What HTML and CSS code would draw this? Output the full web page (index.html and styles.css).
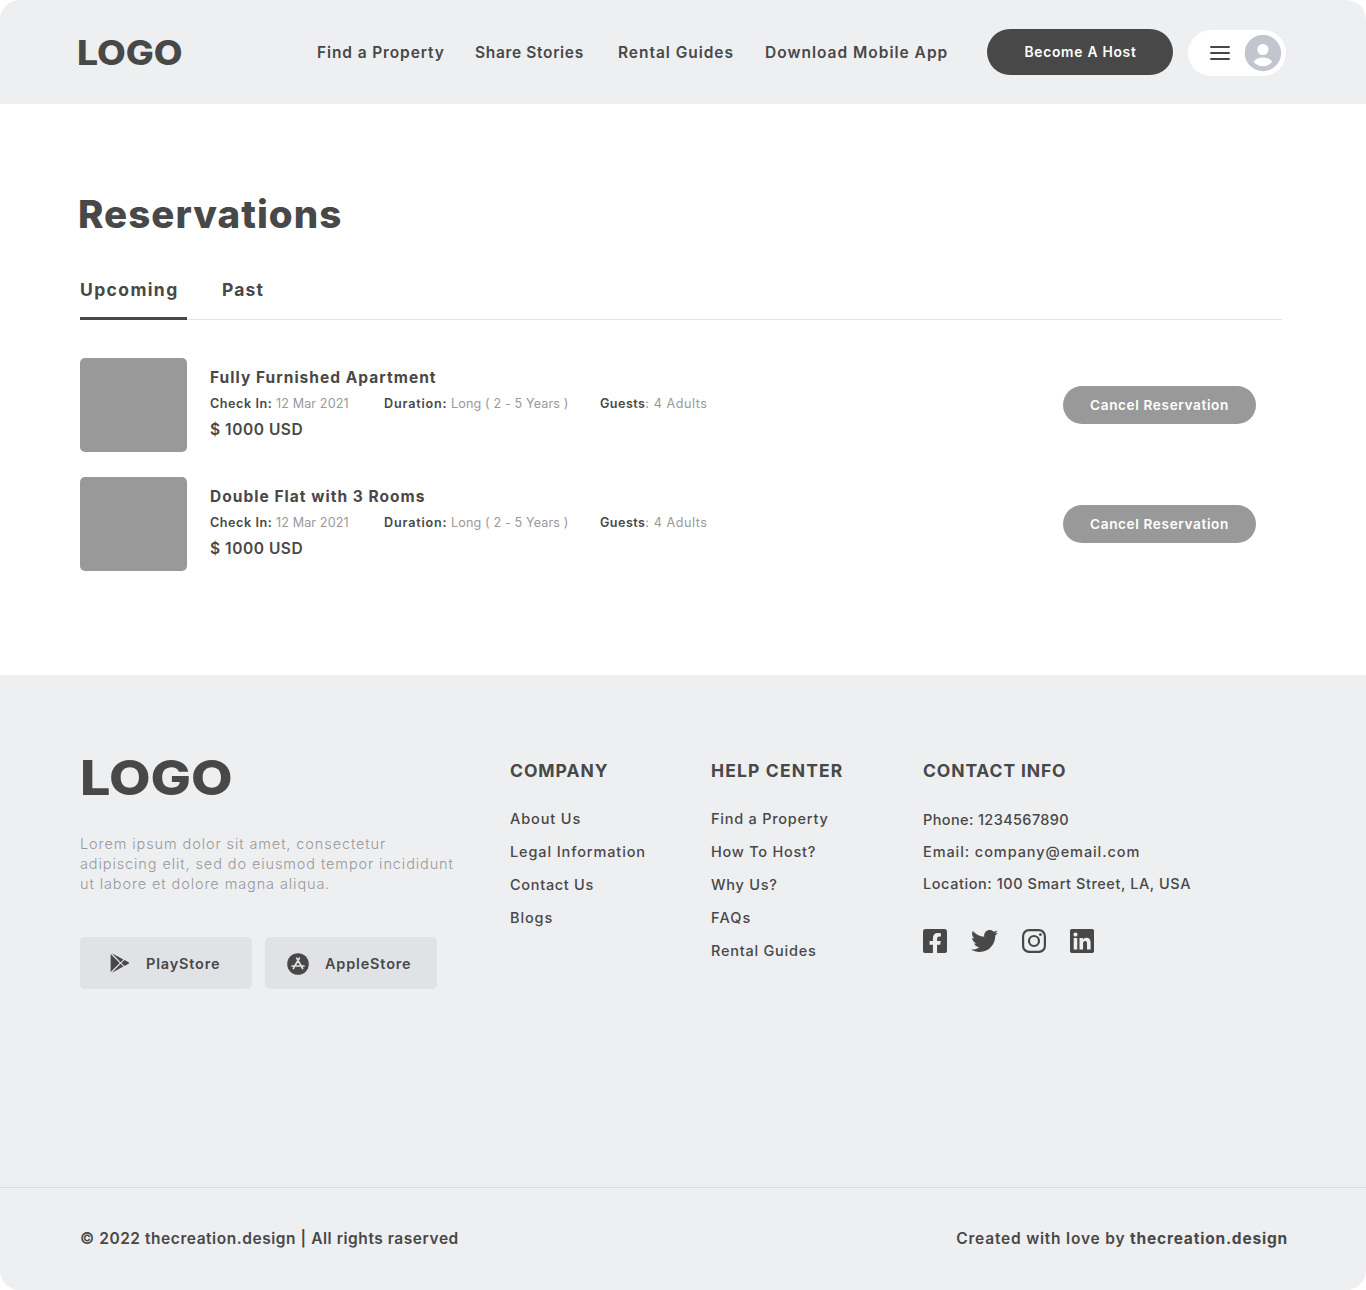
FILE: index.html
```html
<!DOCTYPE html>
<html lang="en">
<head>
<meta charset="utf-8">
<title>Reservations</title>
<link rel="stylesheet" href="styles.css">
</head>
<body>
<div class="page">
  <header class="header">
    <a class="logo">LOGO</a>
    <nav class="nav">
      <a class="nav-find">Find a Property</a>
      <a class="nav-share">Share Stories</a>
      <a class="nav-guides">Rental Guides</a>
      <a class="nav-app">Download Mobile App</a>
    </nav>
    <a class="host-btn">Become A Host</a>
    <div class="account">
      <svg class="menu-icon" width="20" height="16" viewBox="0 0 20 16" stroke="#484848" stroke-width="2" stroke-linecap="round"><path d="M1 2h18M1 8h18M1 14h18"/></svg>
      <svg class="avatar" width="37" height="37" viewBox="0 0 37 37"><circle cx="18.9" cy="18" r="18.2" fill="#c2c5cd"/><circle cx="18.9" cy="14.500" r="5.600" fill="#fff"/><path d="M9.600 26.800c1.700-2.900 5.300-4.400 9.300-4.400s7.600 1.500 9.300 4.400c-2.200 2.900-5.600 4.500-9.300 4.500s-7.100-1.600-9.300-4.500z" fill="#fff"/></svg>
    </div>
  </header>

  <main class="main">
    <h1 class="title">Reservations</h1>
    <div class="tabs">
      <a class="tab tab-active">Upcoming</a>
      <a class="tab tab-past">Past</a>
    </div>
    <section class="list">
      <article class="item">
        <div class="thumb"></div>
        <div class="info">
          <h2 class="name">Fully Furnished Apartment</h2>
          <div class="meta">
            <span class="date"><b class="checkin">Check In:</b> 12 Mar 2021</span>
            <span class="term"><b class="duration">Duration:</b> Long ( 2 - 5 Years )</span>
            <span class="party"><b class="guests">Guests</b>: 4 Adults</span>
          </div>
          <p class="price">$ 1000 USD</p>
        </div>
        <a class="cancel">Cancel Reservation</a>
      </article>
      <article class="item">
        <div class="thumb"></div>
        <div class="info">
          <h2 class="name">Double Flat with 3 Rooms</h2>
          <div class="meta">
            <span class="date"><b class="checkin">Check In:</b> 12 Mar 2021</span>
            <span class="term"><b class="duration">Duration:</b> Long ( 2 - 5 Years )</span>
            <span class="party"><b class="guests">Guests</b>: 4 Adults</span>
          </div>
          <p class="price">$ 1000 USD</p>
        </div>
        <a class="cancel">Cancel Reservation</a>
      </article>
    </section>
  </main>

  <footer class="footer">
    <div class="footer-top">
      <section class="brand">
        <a class="footer-logo">LOGO</a>
        <p class="about">Lorem ipsum dolor sit amet, consectetur<br>adipiscing elit, sed do eiusmod tempor incididunt<br>ut labore et dolore magna aliqua.</p>
        <div class="stores">
          <a class="store store-play">
            <svg width="20" height="20" viewBox="0 0 20 20" fill="#484848"><path d="M.6.9v18.200L9.700 10z"/><path d="M1.900.2l11.500 6.300-2.700 2.700zM1.900 19.800l11.500-6.300-2.700-2.700zM14.400 7l4.200 2.300q.9.700 0 1.400L14.400 13l-3-3z"/></svg>
            <span>PlayStore</span>
          </a>
          <a class="store store-apple">
            <svg width="22" height="22" viewBox="0 0 22 22"><circle cx="11" cy="11" r="10.800" fill="#484848"/><g fill="none" stroke="#e1e2e6" stroke-width="1.700" stroke-linecap="round"><path d="M9.700 5.200l5.900 10.300M12.300 5.200L7.600 13.300M6.900 14.600l-.5.900M5.100 13h7.200M15 13h2"/></g></svg>
            <span>AppleStore</span>
          </a>
        </div>
      </section>
      <section class="column company">
        <h3>COMPANY</h3>
        <a>About Us</a>
        <a>Legal Information</a>
        <a class="snug">Contact Us</a>
        <a>Blogs</a>
      </section>
      <section class="column help">
        <h3>HELP CENTER</h3>
        <a>Find a Property</a>
        <a>How To Host?</a>
        <a>Why Us?</a>
        <a class="faqs">FAQs</a>
        <a>Rental Guides</a>
      </section>
      <section class="column contact">
        <h3>CONTACT INFO</h3>
        <p class="phone">Phone: 1234567890</p>
        <p>Email: company@email.com</p>
        <p class="location">Location: 100 Smart Street, LA, USA</p>
        <div class="social">
          <svg width="24" height="24" viewBox="0 32 448 448" fill="#484848"><path d="M400 32H48A48 48 0 0 0 0 80v352a48 48 0 0 0 48 48h137.250V327.690h-63V256h63v-54.640c0-62.150 37-96.480 93.670-96.480 27.140 0 55.520 4.840 55.520 4.840v61h-31.270c-30.810 0-40.420 19.120-40.420 38.730V256h68.780l-11 71.690h-57.780V480H400a48 48 0 0 0 48-48V80a48 48 0 0 0-48-48z"/></svg>
          <svg width="27" height="24" viewBox="0 32 512 448" fill="#484848"><path d="M459.370 151.716c.325 4.548.325 9.097.325 13.645 0 138.720-105.583 298.558-298.558 298.558-59.452 0-114.680-17.219-161.137-47.106 8.447.974 16.568 1.299 25.340 1.299 49.055 0 94.213-16.568 130.274-44.832-46.132-.975-84.792-31.188-98.112-72.772 6.498.974 12.995 1.624 19.818 1.624 9.421 0 18.843-1.300 27.614-3.573-48.081-9.747-84.143-51.980-84.143-102.985v-1.299c13.969 7.797 30.214 12.670 47.431 13.319-28.264-18.843-46.781-51.005-46.781-87.391 0-19.492 5.197-37.360 14.294-52.954 51.655 63.675 129.300 105.258 216.365 109.807-1.624-7.797-2.599-15.918-2.599-24.040 0-57.828 46.782-104.934 104.934-104.934 30.213 0 57.502 12.670 76.670 33.137 23.715-4.548 46.456-13.320 66.599-25.340-7.798 24.366-24.366 44.833-46.132 57.827 21.117-2.273 41.584-8.122 60.426-16.243-14.292 20.791-32.161 39.308-52.628 54.253z"/></svg>
          <svg width="24" height="24" viewBox="0 0 24 24" fill="none" stroke="#484848" stroke-width="2.200"><rect x="1.100" y="1.100" width="21.800" height="21.800" rx="6"/><circle cx="12" cy="12" r="5"/><circle cx="18.400" cy="5.600" r="1.450" fill="#484848" stroke="none"/></svg>
          <svg width="24" height="24" viewBox="0 32 448 448" fill="#484848"><path d="M416 32H31.900C14.300 32 0 46.500 0 64.300v383.400C0 465.500 14.300 480 31.900 480H416c17.600 0 32-14.500 32-32.300V64.300c0-17.800-14.400-32.300-32-32.300zM135.400 416H69V202.200h66.500V416zm-33.200-243c-21.300 0-38.500-17.300-38.500-38.500S80.900 96 102.200 96c21.200 0 38.500 17.300 38.500 38.500 0 21.300-17.200 38.500-38.500 38.500zm282.100 243h-66.400V312c0-24.800-.5-56.700-34.500-56.700-34.600 0-39.900 27-39.900 54.900V416h-66.400V202.200h63.700v29.200h.9c8.900-16.800 30.600-34.500 62.900-34.500 67.200 0 79.700 44.300 79.700 101.900V416z"/></svg>
        </div>
      </section>
    </div>
    <div class="footer-bottom">
      <p class="copyright">© 2022 thecreation.design | All rights raserved</p>
      <p class="credit">Created with love by <b>thecreation.design</b></p>
    </div>
  </footer>
</div>
</body>
</html>
```
FILE: styles.css
```css
* { box-sizing: border-box; }
body { margin: 0; background: #fff; color: #484848; font-family: Inter, "Open Sans", sans-serif; }
h1, h2, h3, p { margin: 0; }
svg { display: block; flex: none; }
.page { width: 1366px; height: 1290px; display: flex; flex-direction: column; overflow: hidden; border-radius: 20px; background: #fff; white-space: nowrap; }

.header { height: 104px; display: flex; align-items: center; padding-left: 77px; background: #eeeff1; }
.logo { width: 240px; padding-top: 2px; font-size: 34.5px; font-weight: 800; line-height: 42px; transform: scaleX(1.08); transform-origin: left; }
.nav { width: 670px; display: grid; grid-template-columns: 158px 143px 147px 222px; padding-top: 2px; font-size: 15.5px; font-weight: 600; line-height: 24px; }
.nav-find { letter-spacing: .88px; }
.nav-share { letter-spacing: .66px; }
.nav-guides { letter-spacing: .96px; }
.nav-app { letter-spacing: 1px; }
.host-btn { width: 186px; height: 46px; padding-left: 1px; border-radius: 23px; background: #484848; color: #fff; font-size: 13.8px; font-weight: 600; letter-spacing: .75px; line-height: 46px; text-align: center; }
.account { width: 98px; height: 46px; display: flex; align-items: center; gap: 14px; margin: 2px 0 0 15px; padding-left: 22px; border-radius: 23px; background: #fff; }

.main { height: 571px; padding: 85px 84px 0 80px; }
.title { margin-left: -2px; font-size: 38.5px; font-weight: 800; letter-spacing: 1.02px; line-height: 50px; }
.tabs { height: 45px; display: flex; margin-top: 36px; border-bottom: 1px solid #e5e5e5; font-size: 17.5px; font-weight: 700; line-height: 30px; }
.tab { height: 45px; }
.tab-active { width: 107px; border-bottom: 3px solid #484848; letter-spacing: 1.38px; }
.tab-past { margin-left: 35px; letter-spacing: 1.1px; }
.list { display: flex; flex-direction: column; gap: 25px; margin-top: 38px; }
.item { height: 94px; display: flex; align-items: center; padding-right: 26px; }
.thumb { width: 107px; height: 94px; border-radius: 5px; background: #999; }
.info { flex: 1; margin-left: 23px; padding-bottom: 3px; }
.name { font-size: 15.5px; font-weight: 700; letter-spacing: 1.03px; line-height: 26px; }
.meta { display: grid; grid-template-columns: 174px 216px 150px; color: #999; font-size: 12.6px; line-height: 26px; }
.meta b { color: #484848; font-weight: 600; }
.date { letter-spacing: .12px; }
.term { letter-spacing: .12px; }
.party { letter-spacing: .55px; }
.checkin { letter-spacing: .55px; }
.duration { letter-spacing: .82px; }
.guests { letter-spacing: .43px; }
.price { font-size: 15.5px; font-weight: 600; letter-spacing: .54px; line-height: 26px; }
.cancel { width: 193px; height: 38px; border-radius: 19px; background: #999; color: #fff; font-size: 13.6px; font-weight: 600; letter-spacing: .63px; line-height: 38px; text-align: center; }

.footer { height: 615px; background: #eeeff1; }
.footer-top { height: 512px; display: grid; grid-template-columns: 430px 201px 212px 1fr; padding: 77px 80px 0; }
.footer-logo { display: block; width: 170px; font-size: 48.5px; font-weight: 800; line-height: 52px; transform: scaleX(1.11); transform-origin: left; }
.about { margin-top: 30px; color: #999; font-size: 14.5px; font-weight: 300; letter-spacing: .9px; line-height: 20px; }
.stores { display: flex; gap: 13px; margin-top: 43px; }
.store { width: 172px; height: 52px; display: flex; align-items: center; padding-top: 1px; border-radius: 5px; background: #e1e2e6; font-size: 14.5px; font-weight: 600; letter-spacing: .82px; }
.store-play { padding-left: 30px; gap: 16px; }
.store-play svg { margin-top: -1px; }
.store-apple { padding-left: 22px; gap: 16px; }
.column { padding-top: 7px; font-size: 14.5px; font-weight: 500; letter-spacing: .88px; }
.column h3 { margin-bottom: 19px; font-size: 17.5px; font-weight: 700; letter-spacing: .95px; line-height: 24px; }
.column a { display: block; line-height: 33px; }
.column .snug { letter-spacing: .69px; }
.help { letter-spacing: .76px; }
.help .faqs { letter-spacing: 1.15px; }
.help h3 { letter-spacing: 1.15px; }
.contact { letter-spacing: .92px; }
.contact p { line-height: 32px; }
.contact h3 { margin-bottom: 21px; letter-spacing: .87px; }
.contact .phone { letter-spacing: .38px; }
.contact .location { letter-spacing: .56px; }
.social { display: flex; gap: 24px; margin-top: 29px; }
.footer-bottom { height: 103px; display: flex; align-items: center; justify-content: space-between; border-top: 1px solid #dcdddf; padding: 0 78px 2px 80px; font-size: 15.5px; font-weight: 600; }
.copyright { letter-spacing: .55px; }
.credit { letter-spacing: .8px; }
.credit b { font-weight: 700; }
```
